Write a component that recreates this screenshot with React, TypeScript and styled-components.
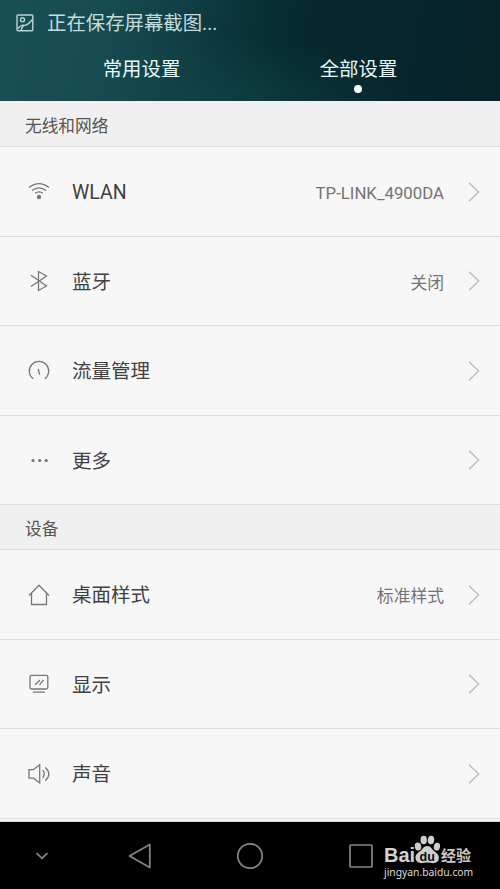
import React from "react";
import styled, { createGlobalStyle } from "styled-components";

const Global = createGlobalStyle`
  html, body { margin: 0; padding: 0; background: #000; }
  * { box-sizing: border-box; }
  body { font-family: Roboto, "Noto Sans CJK SC", sans-serif; overflow: hidden; }
  svg { display: block; flex: none; }
`;

const Screen = styled.div`
  width: 500px;
  height: 889px;
  display: flex;
  flex-direction: column;
  background: #f7f7f7;
`;

const Header = styled.header`
  height: 101px;
  flex: none;
  color: #e9fafa;
  background:
    radial-gradient(ellipse 190px 80px at 46% 115%, rgba(17, 76, 78, 0.6), transparent),
    linear-gradient(100deg, #195055 0%, #164b50 22%, #113f45 36%, #0a333a 47%, #06282f 60%, #07232a 100%);
`;

const StatusBar = styled.div`
  height: 44px;
  padding: 1px 0 0 16px;
  display: flex;
  align-items: center;
  gap: 13px;
  font-size: 19.4px;
  line-height: 28px;
  color: #c3dcdd;
`;

const StatusText = styled.span`
  padding-top: 2px;
`;

const Tabs = styled.nav`
  display: grid;
  grid-template-columns: 217px 217px;
  padding-left: 33px;
`;

const Tab = styled.div`
  height: 57px;
  padding-top: 12px;
  display: flex;
  flex-direction: column;
  align-items: center;
  font-size: 19.4px;
  line-height: 28px;
`;

const ActiveDot = styled.span`
  width: 8px;
  height: 8px;
  margin: 1px 1px 0 0;
  border-radius: 50%;
  background: #fff;
`;

const List = styled.main`
  height: 721px;
  flex: none;
  overflow: hidden;
  border-bottom: 1px solid #d2d2d2;
`;

const SectionTitle = styled.h2<{ $height: number }>`
  height: ${(p) => p.$height}px;
  margin: 0;
  padding: 2px 0 0 25px;
  display: flex;
  align-items: center;
  font-size: 16.7px;
  font-weight: 400;
  color: #555;
  background: #f0f0f0;
  border-bottom: 1px solid #dedede;
`;

const Row = styled.div<{ $height: number }>`
  height: ${(p) => p.$height}px;
  padding: 0 20px 0 27px;
  display: flex;
  align-items: center;
  border-bottom: 1px solid #dedede;
`;

const Label = styled.span`
  margin-left: 21px;
  padding-top: 3px;
  flex: 1;
  font-size: 19.5px;
  line-height: 28px;
  color: #414141;
`;

const Value = styled.span`
  margin-right: 24px;
  padding-top: 3px;
  font-size: 16.8px;
  line-height: 24px;
  color: #747474;
`;

const NavBar = styled.footer`
  flex: 1;
  display: grid;
  grid-template-columns: 84px 111px 110px 74px 1fr;
  align-items: center;
  justify-items: center;
  background: #000;
`;

const Brand = styled.div`
  width: 100%;
  padding: 13px 0 0 5px;
  align-self: start;
  color: #dcdcdc;
`;

const BrandTop = styled.div`
  height: 29px;
  display: flex;
  align-items: flex-end;
`;

const BrandLatin = styled.span`
  width: 30px;
  font: 700 20px/18px "Liberation Sans", sans-serif;
  color: #d2d2d2;
`;

const BrandChinese = styled.span`
  font: 700 15px/18px "Noto Sans CJK SC", sans-serif;
  color: #c8c8c8;
`;

const BrandUrl = styled.div`
  margin-top: 1px;
  font: 400 10.3px/14px "Noto Sans", sans-serif;
  white-space: nowrap;
`;

const RecentsSlot = styled.div`
  justify-self: end;
  margin-right: 6px;
`;

type IconName = "wifi" | "bluetooth" | "data" | "more" | "home" | "display" | "sound";

const glyphs: Record<IconName, React.ReactNode> = {
  wifi: (
    <>
      <path d="M2 7.6Q12 -.4 22 7.6M5 10.5Q12 5.2 19 10.5M8 13.3Q12 10.5 16 13.3" />
      <circle cx="12" cy="17" r="2.2" fill="#777" stroke="none" />
    </>
  ),
  bluetooth: <path d="M4 6.3L19.5 17L11.5 21.5V2.5L19.5 7L4 17.5" />,
  data: <path d="M6.2 19.8A9.7 9.7 0 1 1 17.8 19.8M11.2 10L12.6 15.7" />,
  more: (
    <g fill="#737373" stroke="none">
      <circle cx="6" cy="12.5" r="1.6" />
      <circle cx="12.7" cy="12.5" r="1.6" />
      <circle cx="19.2" cy="12.5" r="1.6" />
    </g>
  ),
  home: <path d="M2 12.5L12 2.3L22 12.5M4.5 10.3V21.5H19.5V10.3" />,
  display: (
    <>
      <rect x="3" y="3.3" width="17.8" height="13.7" rx="1.5" />
      <path d="M6 20.2H18M8.2 12.8L13 8M12.5 12.8L16.5 8" />
    </>
  ),
  sound: <path d="M2 7.6H6.5L12.7 2.8V21L6.5 16.2H2ZM15.7 8.2Q18.8 12 15.7 16M18.3 5.5Q25.5 12 18.3 18.7" />,
};

const RowIcon = ({ name }: { name: IconName }) => (
  <svg width="24" height="24" viewBox="0 0 24 24" fill="none" stroke="#777" strokeWidth="1.3">
    {glyphs[name]}
  </svg>
);

const Chevron = () => (
  <svg width="12" height="20" viewBox="0 0 12 20" fill="none" stroke="#b9b9b9" strokeWidth="1.25">
    <path d="M1 .7L10.7 10L1 19.3" />
  </svg>
);

const ScreenshotIcon = () => (
  <svg width="18" height="18" viewBox="0 0 18 18" fill="none" stroke="#b9d4d5" strokeWidth="1.4">
    <rect x="1" y="1" width="15.8" height="15.8" rx="1" />
    <circle cx="6.5" cy="5.8" r="2" />
    <path d="M2 14.5Q5 10.5 8 11.3T16 5.7M5.2 16Q5.8 12.7 8 11.3" />
  </svg>
);

const Paw = () => (
  <svg width="27" height="29" viewBox="0 0 27 29" fill="#cecece">
    <ellipse cx="4" cy="11.5" rx="3.2" ry="4" transform="rotate(-12 4 11.5)" />
    <ellipse cx="9.7" cy="5" rx="3.2" ry="4.3" />
    <ellipse cx="17" cy="5" rx="3.2" ry="4.3" transform="rotate(8 17 5)" />
    <ellipse cx="22.9" cy="11.7" rx="3.1" ry="4" transform="rotate(12 22.9 11.7)" />
    <path d="M13.2 11C9.7 11 8.7 14 6.2 16C3 18.3 1.2 20.3 1.5 23C2 28 7 28.7 9.7 27.8Q13.2 27 16.7 27.8C20 28.7 24.6 28 24.9 23C25 20.3 23 18.2 20.1 16C17.7 14 16.7 11 13.2 11Z" />
    <text x="13.2" y="25.8" textAnchor="middle" fontFamily="Liberation Sans, sans-serif" fontSize="12.5" fontWeight="700" fill="#080808">du</text>
  </svg>
);

interface Item {
  icon: IconName;
  label: string;
  value?: string;
  height: number;
}

const sections: { title: string; height: number; items: Item[] }[] = [
  {
    title: "无线和网络",
    height: 46,
    items: [
      { icon: "wifi", label: "WLAN", value: "TP-LINK_4900DA", height: 90 },
      { icon: "bluetooth", label: "蓝牙", value: "关闭", height: 89 },
      { icon: "data", label: "流量管理", height: 90 },
      { icon: "more", label: "更多", height: 89 },
    ],
  },
  {
    title: "设备",
    height: 45,
    items: [
      { icon: "home", label: "桌面样式", value: "标准样式", height: 90 },
      { icon: "display", label: "显示", height: 89 },
      { icon: "sound", label: "声音", height: 90 },
    ],
  },
];

export default function App() {
  return (
    <Screen>
      <Global />
      <Header>
        <StatusBar>
          <ScreenshotIcon />
          <StatusText>正在保存屏幕截图...</StatusText>
        </StatusBar>
        <Tabs>
          <Tab>常用设置</Tab>
          <Tab>
            全部设置
            <ActiveDot />
          </Tab>
        </Tabs>
      </Header>
      <List>
        {sections.map((section) => (
          <section key={section.title}>
            <SectionTitle $height={section.height}>{section.title}</SectionTitle>
            {section.items.map((item) => (
              <Row key={item.label} $height={item.height}>
                <RowIcon name={item.icon} />
                <Label>{item.label}</Label>
                {item.value && <Value>{item.value}</Value>}
                <Chevron />
              </Row>
            ))}
          </section>
        ))}
      </List>
      <NavBar>
        <svg width="14" height="10" viewBox="0 0 14 10" fill="none" stroke="#8b8b8b" strokeWidth="1.7">
          <path d="M1.5 2L7 7.3L12.5 2" />
        </svg>
        <svg width="24" height="26" viewBox="0 0 24 26" fill="none" stroke="#858585" strokeWidth="1.7" strokeLinejoin="round">
          <path d="M1.5 13L21.8 1.5V24.5Z" />
        </svg>
        <svg width="28" height="28" viewBox="0 0 28 28" fill="none" stroke="#858585" strokeWidth="1.7">
          <circle cx="14" cy="14" r="12.2" />
        </svg>
        <RecentsSlot>
          <svg width="24" height="24" viewBox="0 0 24 24" fill="none" stroke="#858585" strokeWidth="1.7">
            <rect x="1" y="1" width="22" height="22" rx="1" />
          </svg>
        </RecentsSlot>
        <Brand>
          <BrandTop>
            <BrandLatin>Bai</BrandLatin>
            <Paw />
            <BrandChinese>经验</BrandChinese>
          </BrandTop>
          <BrandUrl>jingyan.baidu.com</BrandUrl>
        </Brand>
      </NavBar>
    </Screen>
  );
}
